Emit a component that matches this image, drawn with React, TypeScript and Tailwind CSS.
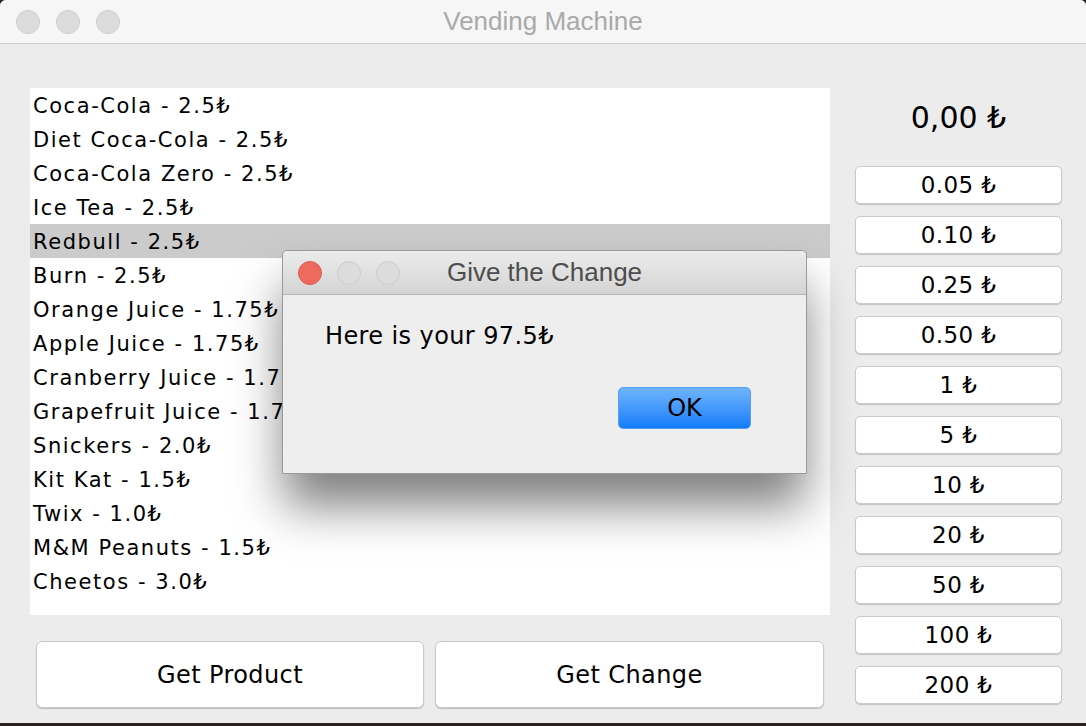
import React from 'react';

const products = [
  'Coca-Cola - 2.5₺',
  'Diet Coca-Cola - 2.5₺',
  'Coca-Cola Zero - 2.5₺',
  'Ice Tea - 2.5₺',
  'Redbull - 2.5₺',
  'Burn - 2.5₺',
  'Orange Juice - 1.75₺',
  'Apple Juice - 1.75₺',
  'Cranberry Juice - 1.75₺',
  'Grapefruit Juice - 1.75₺',
  'Snickers - 2.0₺',
  'Kit Kat - 1.5₺',
  'Twix - 1.0₺',
  'M&M Peanuts - 1.5₺',
  'Cheetos - 3.0₺',
];

const coins = ['0.05 ₺', '0.10 ₺', '0.25 ₺', '0.50 ₺', '1 ₺', '5 ₺', '10 ₺', '20 ₺', '50 ₺', '100 ₺', '200 ₺'];

const uiFont = "font-['DejaVu_Sans','Noto_Sans',sans-serif]";
const titleFont = "font-['Liberation_Sans','Noto_Sans',sans-serif]";

function Light({ red }: { red?: boolean }) {
  return (
    <div
      className={
        red
          ? 'w-[24px] h-[24px] rounded-full bg-[#ef6a5e] border border-[#dd5a4f]'
          : 'w-[24px] h-[24px] rounded-full bg-[#dcdcdc] border border-[#cdcdcd]'
      }
    />
  );
}

function GiveChangeDialog() {
  return (
    <div className="absolute left-[282px] top-[250px] w-[525px] h-[224px] flex flex-col rounded-t-[5px] border border-[#9a9a9a] bg-[#eeeeee] shadow-[0_34px_48px_-2px_rgba(0,0,0,0.5)]">
      <div className="h-[44px] grid grid-cols-[1fr_auto_1fr] items-center rounded-t-[5px] bg-gradient-to-b from-[#ececec] to-[#d4d4d4] border-b border-[#b4b4b4]">
        <div className="flex items-center gap-[15px] pl-[15px]">
          <Light red />
          <Light />
          <Light />
        </div>
        <span className={`${titleFont} text-[26px] text-[#4d4d4d] leading-none pb-[1px]`}>Give the Change</span>
        <div />
      </div>
      <div className="flex-1 flex flex-col pl-[42px] pr-[55px] pt-[25px]">
        <p className={`${uiFont} text-[24px] leading-[32px] tracking-[0.4px] text-black`}>Here is your 97.5₺</p>
        <div className="flex justify-end mt-[35px]">
          <button className={`${uiFont} w-[133px] h-[42px] rounded-[5px] border border-[#55a0f7] bg-gradient-to-b from-[#6db4fb] to-[#0e7cfb] text-[24px] text-black leading-none`}>
            OK
          </button>
        </div>
      </div>
    </div>
  );
}

export default function App() {
  return (
    <div className="relative w-[1086px] h-[726px] bg-[#2b2320] overflow-hidden">
      <div className="h-[723px] flex flex-col rounded-t-[6px] bg-[#ececec] overflow-hidden">
        <div className="h-[44px] shrink-0 grid grid-cols-[1fr_auto_1fr] items-center bg-[#f6f6f6] border-b border-[#d0d0d0]">
          <div className="flex items-center gap-[16px] pl-[16px]">
            <Light />
            <Light />
            <Light />
          </div>
          <span className={`${titleFont} text-[26px] text-[#a9a9a9] leading-none pb-[1px]`}>Vending Machine</span>
          <div />
        </div>

        <div className="flex-1 flex">
          <div className="w-[830px] pl-[30px] flex flex-col">
            <ul className="mt-[44px] h-[527px] w-[800px] bg-white">
              {products.map((p, i) => (
                <li
                  key={p}
                  className={`${uiFont} h-[34px] flex items-center pl-[3px] pt-[3px] text-[21px] tracking-[1.55px] text-black ${
                    i === 4 ? 'bg-[#cbcbcb]' : ''
                  }`}
                >
                  {p}
                </li>
              ))}
            </ul>
            <div className="flex gap-[11px] mt-[26px] pl-[6px]">
              <button className={`${uiFont} w-[388px] h-[67px] rounded-[6px] bg-white border border-[#c9c9c9] shadow-[0_1px_1px_rgba(0,0,0,0.2)] text-[24px] tracking-[0.4px] text-black`}>
                Get Product
              </button>
              <button className={`${uiFont} w-[389px] h-[67px] rounded-[6px] bg-white border border-[#c9c9c9] shadow-[0_1px_1px_rgba(0,0,0,0.2)] text-[24px] tracking-[0.4px] text-black`}>
                Get Change
              </button>
            </div>
          </div>

          <div className="ml-[25px] w-[207px] flex flex-col">
            <div className={`${uiFont} mt-[44px] h-[58px] flex items-center justify-center text-[30px] text-black`}>
              0,00 ₺
            </div>
            <div className="mt-[20px] flex flex-col gap-[12px]">
              {coins.map((c) => (
                <button
                  key={c}
                  className={`${uiFont} h-[38px] rounded-[5px] bg-white border border-[#cacaca] shadow-[0_1px_1px_rgba(0,0,0,0.18)] text-[23px] tracking-[0.4px] text-black leading-none`}
                >
                  {c}
                </button>
              ))}
            </div>
          </div>
        </div>
      </div>

      <GiveChangeDialog />
    </div>
  );
}
